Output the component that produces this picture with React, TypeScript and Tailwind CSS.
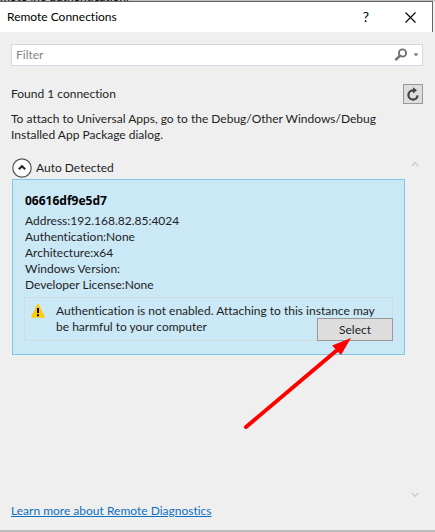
import { useState } from "react";

const details = [
  ["Address", "192.168.82.85:4024"],
  ["Authentication", "None"],
  ["Architecture", "x64"],
  ["Windows Version", ""],
  ["Developer License", "None"],
];

function TitleBar() {
  return (
    <header className="flex h-[30px] items-center justify-between bg-white pl-[7px] pr-4">
      <h1 className="text-[12px] leading-4 text-black">Remote Connections</h1>
      <div className="flex items-center gap-[34px]">
        <button type="button" aria-label="Help" className="w-[10px] text-[14px] leading-4 text-black">
          ?
        </button>
        <button type="button" aria-label="Close">
          <svg width="11" height="11" viewBox="0 0 11 11" fill="none" stroke="#000" strokeWidth="1.1">
            <path d="M.5 .5l10 10M10.5 .5l-10 10" />
          </svg>
        </button>
      </div>
    </header>
  );
}

function FilterBox() {
  return (
    <div className="flex h-[22px] items-center border border-[#d6d7e5] bg-white pl-1 pr-[3px]">
      <input
        type="text"
        aria-label="Filter"
        placeholder="Filter"
        className="min-w-0 flex-1 bg-transparent text-[12px] leading-4 outline-none placeholder:text-[#858585]"
      />
      <button type="button" aria-label="Search" className="flex items-center gap-[5px]">
        <svg width="14" height="14" viewBox="0 0 14 14" fill="none" stroke="#717171">
          <circle cx="8.5" cy="5" r="3.6" strokeWidth="1.9" />
          <path d="M5.8 7.8L1.4 12.2" strokeWidth="2.6" />
        </svg>
        <svg width="6" height="4" viewBox="0 0 6 4" fill="#717171">
          <path d="M.5 .5h5L3 3.2z" />
        </svg>
      </button>
    </div>
  );
}

function ScrollChevron({ down }: { down?: boolean }) {
  return (
    <svg width="8" height="6" viewBox="0 0 8 6" fill="none" stroke="#d0d0d0" strokeWidth="1.6">
      <path d={down ? "M.8 1L4 4.4L7.2 1" : "M.8 5L4 1.6L7.2 5"} />
    </svg>
  );
}

function Warning() {
  return (
    <div className="flex h-[44px] items-start gap-[11px] border border-[#d3dbe1] pl-[6px] pt-[5px]">
      <svg width="14" height="16" viewBox="0 0 14 16" className="shrink-0">
        <path d="M7 1.4L13.2 14H.8z" fill="#fc0" stroke="#fc0" strokeWidth="1.4" strokeLinejoin="round" />
        <path d="M6 5h2v5H6zM6 11.2h2v2H6z" fill="#000" />
      </svg>
      <p>
        Authentication is not enabled. Attaching to this instance may
        <br />
        be harmful to your computer
      </p>
    </div>
  );
}

function ConnectionCard() {
  return (
    <article className="mt-px border border-[#81c7e8] bg-[#cbe8f6] px-[11px] pb-[13px] pt-[13px]">
      <h3 className="pl-px font-['Noto_Sans','Open_Sans',sans-serif] text-[12px] font-bold leading-4 text-black">
        06616df9e5d7
      </h3>
      <dl className="mt-1 pl-px">
        {details.map(([name, value]) => (
          <div key={name} className="flex">
            <dt>{name}:</dt>
            <dd>{value}</dd>
          </div>
        ))}
      </dl>
      <div className="relative mt-1">
        <Warning />
        <button
          type="button"
          className="absolute bottom-0 right-0 h-[23px] w-[76px] border border-[#999] bg-[#ddd] text-[12px] leading-4"
        >
          Select
        </button>
        <svg
          width="108"
          height="92"
          viewBox="0 0 108 92"
          className="pointer-events-none absolute right-[41px] top-[40px]"
        >
          <path d="M2 90L92 14" stroke="#f00" strokeWidth="4" strokeLinecap="round" />
          <path d="M107 1L88 8.5L97 18z" fill="#f00" />
        </svg>
      </div>
    </article>
  );
}

export default function App() {
  const [open, setOpen] = useState(true);
  return (
    <div className="flex min-h-screen flex-col bg-[#bdbdbd] font-['Lato','Open_Sans',sans-serif] text-[12px] leading-4 text-[#1e1e1e] [font-variant-ligatures:none]">
      <div className="flex h-px items-end overflow-hidden">
        <span className="text-[12px] leading-[8px] text-black">mote (no authentication)</span>
      </div>
      <main className="mb-[2px] flex flex-1 flex-col bg-[#efefef]">
        <div className="mr-[2px] border-r border-t border-[#666]">
          <TitleBar />
        </div>
        <div className="flex flex-1 flex-col pb-[11px] pl-[11px] pr-3 pt-3">
          <FilterBox />
          <div className="mt-[18px] flex h-5 items-center justify-between">
            <p>Found 1 connection</p>
            <button
              type="button"
              aria-label="Refresh"
              className="flex size-5 items-center justify-center border border-[#999] bg-[#ddd]"
            >
              <svg width="14" height="14" viewBox="0 0 14 14" fill="none" stroke="#424242">
                <path d="M8.5 3.4H7A4.6 4.6 0 1 0 11.6 8.4" strokeWidth="2.2" />
                <path d="M7 .2L11 3.3L7 6.4z" fill="#424242" stroke="none" />
              </svg>
            </button>
          </div>
          <p className="mt-[7px]">
            To attach to Universal Apps, go to the Debug/Other Windows/Debug
            <br />
            Installed App Package dialog.
          </p>
          <div className="mt-[15px] flex flex-1">
            <section className="ml-px min-w-0 flex-1">
              <h2>
                <button
                  type="button"
                  aria-expanded={open}
                  onClick={() => setOpen(!open)}
                  className="flex h-5 items-center gap-1"
                >
                  <svg width="20" height="20" viewBox="0 0 20 20" fill="none">
                    <circle cx="10" cy="10" r="9.2" fill="#fff" stroke="#555" strokeWidth="1.2" />
                    <path d="M6.8 11.2L10 8.2L13.2 11.2" stroke="#222" strokeWidth="2" />
                  </svg>
                  <span>Auto Detected</span>
                </button>
              </h2>
              {open && <ConnectionCard />}
            </section>
            <div className="flex w-[18px] flex-col items-end justify-between pb-[3px] pr-1 pt-[3px]">
              <ScrollChevron />
              <ScrollChevron down />
            </div>
          </div>
          <a href="#learn" className="mt-[2px] self-start text-[#0e70c0] underline">
            Learn more about Remote Diagnostics
          </a>
        </div>
      </main>
    </div>
  );
}
